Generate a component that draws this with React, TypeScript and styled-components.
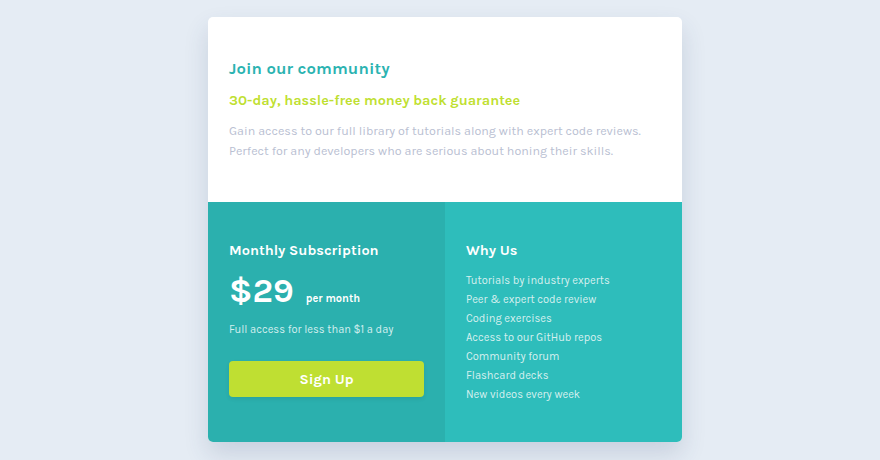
import React from "react";
import styled, { createGlobalStyle } from "styled-components";

const Global = createGlobalStyle`
  html, body { margin: 0; padding: 0; }
  body {
    background: #e5ecf4;
    font-family: "Karla", Lato, "Open Sans", sans-serif;
    -webkit-font-smoothing: antialiased;
  }
`;

const Page = styled.div`
  width: 880px;
  height: 460px;
  display: flex;
  justify-content: center;
  padding: 17px 0 0 10px;
  box-sizing: border-box;
`;

const Card = styled.div`
  width: 474px;
  height: 425px;
  border-radius: 5px;
  overflow: hidden;
  background: #ffffff;
  box-shadow: 0 12px 24px rgba(48, 70, 110, 0.16);
  display: flex;
  flex-direction: column;
`;

const Top = styled.section`
  height: 185px;
  padding: 40px 21px 0;
  box-sizing: border-box;
`;

const Title = styled.h1`
  margin: 0;
  font-size: 16.7px;
  font-weight: 700;
  color: #2bb3b1;
  line-height: 24px;
  letter-spacing: 0.1px;
`;

const Subtitle = styled.h2`
  margin: 10px 0 0;
  font-size: 14.4px;
  font-weight: 700;
  color: #bfdf32;
  line-height: 20px;
`;

const Text = styled.p`
  margin: 10px 0 0;
  font-size: 12.5px;
  line-height: 20px;
  color: #b9c0d2;
`;

const Bottom = styled.div`
  flex: 1;
  display: grid;
  grid-template-columns: 237px 237px;
`;

const Column = styled.section<{ $tone: "dark" | "light" }>`
  background: ${(p) => (p.$tone === "dark" ? "#2bb0ae" : "#2ebdbb")};
  padding: 39px 21px 0;
  box-sizing: border-box;
  color: #ffffff;
`;

const ColTitle = styled.h3`
  margin: 0;
  font-size: 14.5px;
  font-weight: 700;
  line-height: 20px;
`;

const PriceRow = styled.div`
  display: flex;
  align-items: baseline;
  gap: 12px;
  margin-top: 9px;
`;

const Price = styled.span`
  font-size: 34px;
  font-weight: 700;
  line-height: 42px;
`;

const Per = styled.span`
  font-size: 11px;
  font-weight: 700;
`;

const Small = styled.p`
  margin: 9px 0 0;
  font-size: 11.1px;
  line-height: 18px;
  color: #d4efee;
`;

const Button = styled.button`
  margin-top: 22px;
  width: 195px;
  height: 36px;
  border: none;
  border-radius: 4px;
  background: #bfdf32;
  color: #ffffff;
  font-family: inherit;
  font-size: 14.5px;
  font-weight: 700;
  box-shadow: 0 2px 4px rgba(0, 0, 0, 0.08);
  cursor: pointer;
`;

const List = styled.ul`
  list-style: none;
  margin: 10px 0 0;
  padding: 0;
`;

const Item = styled.li`
  font-size: 11.1px;
  line-height: 19px;
  color: #d6f0ef;
`;

const reasons = [
  "Tutorials by industry experts",
  "Peer & expert code review",
  "Coding exercises",
  "Access to our GitHub repos",
  "Community forum",
  "Flashcard decks",
  "New videos every week",
];

export default function App() {
  return (
    <>
      <Global />
      <Page>
        <Card>
          <Top>
            <Title>Join our community</Title>
            <Subtitle>30-day, hassle-free money back guarantee</Subtitle>
            <Text>
              Gain access to our full library of tutorials along with expert code reviews.
              <br />
              Perfect for any developers who are serious about honing their skills.
            </Text>
          </Top>
          <Bottom>
            <Column $tone="dark">
              <ColTitle>Monthly Subscription</ColTitle>
              <PriceRow>
                <Price>$29</Price>
                <Per>per month</Per>
              </PriceRow>
              <Small>Full access for less than $1 a day</Small>
              <Button>Sign Up</Button>
            </Column>
            <Column $tone="light">
              <ColTitle>Why Us</ColTitle>
              <List>
                {reasons.map((r) => (
                  <Item key={r}>{r}</Item>
                ))}
              </List>
            </Column>
          </Bottom>
        </Card>
      </Page>
    </>
  );
}
